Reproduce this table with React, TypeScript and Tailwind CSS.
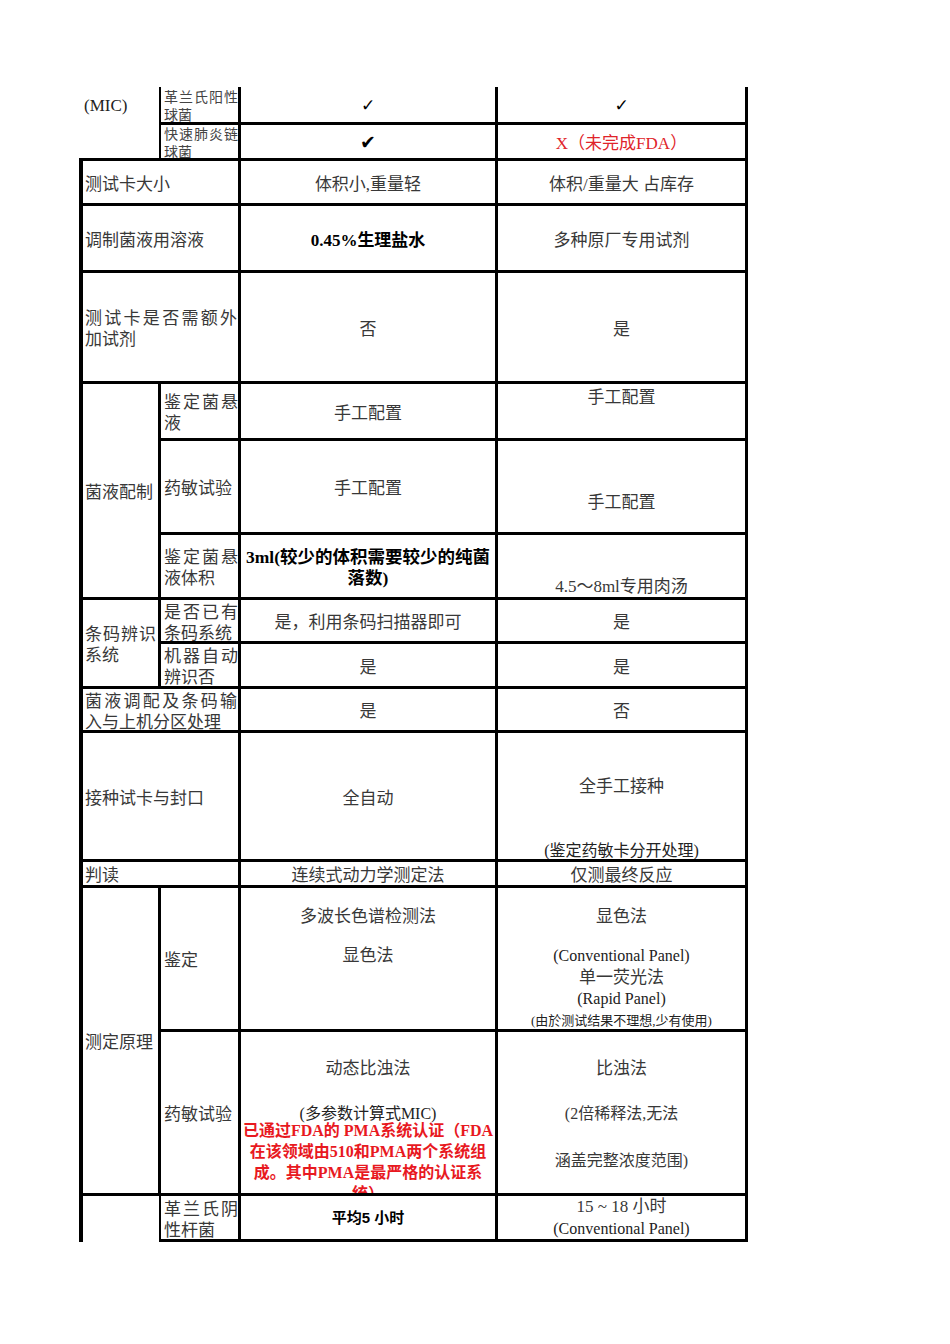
import React from "react";

const J = ({ t, className = "" }: { t: string; className?: string }) => (
  <div className={"flex justify-between " + className}>
    {Array.from(t).map((c, i) => (
      <span key={i}>{c}</span>
    ))}
  </div>
);

const base = "box-border border-black border-r-[3px] border-b-[3px] overflow-hidden";
const center = " flex flex-col items-center justify-center text-center pt-[4px]";
const centerNoPad = " flex flex-col items-center justify-center text-center";
const leftMid = " flex flex-col justify-center pt-[4px]";

export default function App() {
  return (
    <div className="w-[950px] h-[1344px] bg-white pl-[79px] pt-[87px] [font-family:'Liberation_Serif','Noto_Sans_CJK_SC',serif] text-[17px] leading-[21px] text-[#383838]">
      <div className="grid w-[669px] grid-cols-[82px_80px_257px_250px] grid-rows-[38px_36px_45px_67px_111px_57px_94px_65px_44px_45px_44px_129px_26px_144px_164px_46px]">
        {/* Row 1-2 */}
        <div className="col-start-1 row-start-1 row-span-2 box-border border-black border-r-[2px] border-b-[3px] pl-[5px] pt-[8px] text-[#222]">
          (MIC)
        </div>
        <div className={base + " col-start-2 row-start-1 pl-[3px] pt-[2px] text-[14px] leading-[18px] text-[#444]"}>
          <J t="革兰氏阳性" />
          <div>球菌</div>
        </div>
        <div className={base + centerNoPad + " col-start-3 row-start-1 text-black"}>
          <span className="[font-family:'DejaVu_Sans',sans-serif] text-[17px] leading-[18px]">✓</span>
        </div>
        <div className={base + centerNoPad + " col-start-4 row-start-1 text-black"}>
          <span className="[font-family:'DejaVu_Sans',sans-serif] text-[17px] leading-[18px]">✓</span>
        </div>

        <div className={base + " col-start-2 row-start-2 pl-[3px] pt-[1px] text-[14px] leading-[18px] text-[#444]"}>
          <J t="快速肺炎链" />
          <div>球菌</div>
        </div>
        <div className={base + centerNoPad + " col-start-3 row-start-2 text-black"}>
          <span className="[font-family:'DejaVu_Sans',sans-serif] text-[19px] leading-[20px]">{"\u2714\uFE0E"}</span>
        </div>
        <div className={base + center + " col-start-4 row-start-2 text-[#e0242a]"}>
          X（未完成FDA）
        </div>

        {/* Row 3 */}
        <div className={base + leftMid + " col-start-1 col-span-2 row-start-3 border-l-[4px] pl-[2px]"}>
          测试卡大小
        </div>
        <div className={base + center + " col-start-3 row-start-3"}>体积小,重量轻</div>
        <div className={base + center + " col-start-4 row-start-3"}>体积/重量大 占库存</div>

        {/* Row 4 */}
        <div className={base + leftMid + " col-start-1 col-span-2 row-start-4 border-l-[4px] pl-[2px]"}>
          调制菌液用溶液
        </div>
        <div className={base + center + " col-start-3 row-start-4 font-bold text-black"}>0.45%生理盐水</div>
        <div className={base + center + " col-start-4 row-start-4"}>多种原厂专用试剂</div>

        {/* Row 5 */}
        <div className={base + leftMid + " col-start-1 col-span-2 row-start-5 border-l-[4px] pl-[2px] pr-[1px]"}>
          <J t="测试卡是否需额外" />
          <div>加试剂</div>
        </div>
        <div className={base + center + " col-start-3 row-start-5"}>否</div>
        <div className={base + center + " col-start-4 row-start-5"}>是</div>

        {/* Rows 6-8 */}
        <div className={base + leftMid + " col-start-1 row-start-6 row-span-3 border-l-[4px] border-r-[2px] pl-[2px]"}>
          菌液配制
        </div>
        <div className={base + leftMid + " col-start-2 row-start-6 pl-[3px]"}>
          <J t="鉴定菌悬" />
          <div>液</div>
        </div>
        <div className={base + center + " col-start-3 row-start-6"}>手工配置</div>
        <div className={base + " col-start-4 row-start-6 flex flex-col items-center pt-[3px]"}>手工配置</div>

        <div className={base + leftMid + " col-start-2 row-start-7 pl-[3px]"}>药敏试验</div>
        <div className={base + center + " col-start-3 row-start-7"}>手工配置</div>
        <div className={base + " col-start-4 row-start-7 flex flex-col items-center pt-[51px]"}>手工配置</div>

        <div className={base + leftMid + " col-start-2 row-start-8 pl-[3px]"}>
          <J t="鉴定菌悬" />
          <div>液体积</div>
        </div>
        <div className={base + center + " col-start-3 row-start-8 font-bold text-black text-[17.5px]"}>
          <div className="whitespace-nowrap">3ml(较少的体积需要较少的纯菌</div>
          <div>落数)</div>
        </div>
        <div className={base + " col-start-4 row-start-8 flex flex-col items-center justify-end"}>4.5～8ml专用肉汤</div>

        {/* Rows 9-10 */}
        <div className={base + leftMid + " col-start-1 row-start-9 row-span-2 border-l-[4px] border-r-[2px] pl-[2px] pr-[2px]"}>
          <J t="条码辨识" />
          <div>系统</div>
        </div>
        <div className={base + leftMid + " col-start-2 row-start-9 pl-[3px]"}>
          <J t="是否已有" />
          <div>条码系统</div>
        </div>
        <div className={base + center + " col-start-3 row-start-9"}>是，利用条码扫描器即可</div>
        <div className={base + center + " col-start-4 row-start-9"}>是</div>

        <div className={base + leftMid + " col-start-2 row-start-10 pl-[3px]"}>
          <J t="机器自动" />
          <div>辨识否</div>
        </div>
        <div className={base + center + " col-start-3 row-start-10"}>是</div>
        <div className={base + center + " col-start-4 row-start-10"}>是</div>

        {/* Row 11 */}
        <div className={base + leftMid + " col-start-1 col-span-2 row-start-11 border-l-[4px] pl-[2px] pr-[1px]"}>
          <J t="菌液调配及条码输" />
          <div>入与上机分区处理</div>
        </div>
        <div className={base + center + " col-start-3 row-start-11"}>是</div>
        <div className={base + center + " col-start-4 row-start-11"}>否</div>

        {/* Row 12 */}
        <div className={base + leftMid + " col-start-1 col-span-2 row-start-12 border-l-[4px] pl-[2px]"}>
          接种试卡与封口
        </div>
        <div className={base + center + " col-start-3 row-start-12"}>全自动</div>
        <div className={base + " col-start-4 row-start-12 flex flex-col items-center pt-[43px]"}>
          <div>全手工接种</div>
          <div className="mt-[43px] text-[16px] text-[#222]">(鉴定药敏卡分开处理)</div>
        </div>

        {/* Row 13 */}
        <div className={base + leftMid + " col-start-1 col-span-2 row-start-13 border-l-[4px] pl-[2px]"}>判读</div>
        <div className={base + center + " col-start-3 row-start-13"}>连续式动力学测定法</div>
        <div className={base + center + " col-start-4 row-start-13"}>仅测最终反应</div>

        {/* Rows 14-15 */}
        <div className={base + leftMid + " col-start-1 row-start-14 row-span-2 border-l-[4px] border-r-[2px] pl-[2px]"}>
          测定原理
        </div>
        <div className={base + leftMid + " col-start-2 row-start-14 pl-[3px]"}>鉴定</div>
        <div className={base + " col-start-3 row-start-14 flex flex-col items-center pt-[18px]"}>
          <div>多波长色谱检测法</div>
          <div className="mt-[18px]">显色法</div>
        </div>
        <div className={base + " col-start-4 row-start-14 flex flex-col items-center pt-[18px] whitespace-nowrap"}>
          <div>显色法</div>
          <div className="mt-[18px] text-[16px] text-[#222]">(Conventional Panel)</div>
          <div className="mt-[1px]">单一荧光法</div>
          <div className="text-[16px] text-[#222]">(Rapid Panel)</div>
          <div className="mt-[1px] text-[13px] text-[#222]">(由於测试结果不理想,少有使用)</div>
        </div>

        <div className={base + leftMid + " col-start-2 row-start-15 pl-[3px]"}>药敏试验</div>
        <div className={base + " col-start-3 row-start-15 flex flex-col items-center pt-[26px] whitespace-nowrap"}>
          <div>动态比浊法</div>
          <div className="mt-[24px] text-[16px] text-[#222]">(多参数计算式MIC)</div>
          <div className="mt-[-4px] flex flex-col items-center text-[16px] leading-[21px] font-bold text-[#e8191f]">
            <div>已通过FDA的 PMA系统认证（FDA</div>
            <div>在该领域由510和PMA两个系统组</div>
            <div>成。其中PMA是最严格的认证系</div>
            <div>统）</div>
          </div>
        </div>
        <div className={base + " col-start-4 row-start-15 flex flex-col items-center pt-[26px] whitespace-nowrap"}>
          <div>比浊法</div>
          <div className="mt-[24px] text-[16px]">(2倍稀释法,无法</div>
          <div className="mt-[26px] text-[16px]">涵盖完整浓度范围)</div>
        </div>

        {/* Row 16 */}
        <div className="col-start-1 row-start-16 box-border border-black border-l-[4px] border-r-[2px]" />
        <div className={base + leftMid + " col-start-2 row-start-16 pl-[3px]"}>
          <J t="革兰氏阴" />
          <div>性杆菌</div>
        </div>
        <div className={base + centerNoPad + " col-start-3 row-start-16 [font-family:'Liberation_Sans','Noto_Sans_CJK_SC',sans-serif] font-bold text-[15px] text-black"}>
          平均5 小时
        </div>
        <div className={base + centerNoPad + " col-start-4 row-start-16 leading-[22px]"}>
          <div>15 ~ 18 小时</div>
          <div className="text-[16px] text-[#222]">(Conventional Panel)</div>
        </div>
      </div>
    </div>
  );
}
